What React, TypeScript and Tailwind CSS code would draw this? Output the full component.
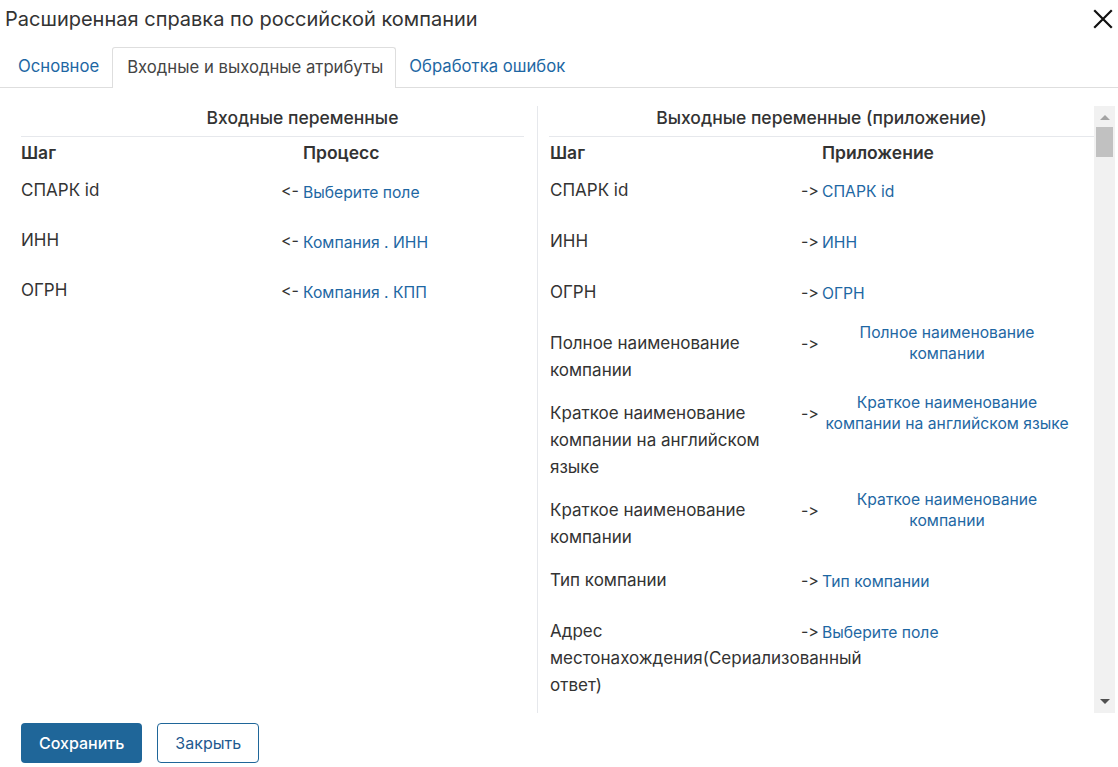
const inputRows = [
  { step: "СПАРК id", value: "Выберите поле" },
  { step: "ИНН", value: "Компания . ИНН" },
  { step: "ОГРН", value: "Компания . КПП" },
];

const outputRows = [
  { step: "СПАРК id", value: "СПАРК id", multi: false },
  { step: "ИНН", value: "ИНН", multi: false },
  { step: "ОГРН", value: "ОГРН", multi: false },
  { step: "Полное наименование компании", value: "Полное наименование компании", multi: true },
  {
    step: "Краткое наименование компании на английском языке",
    value: "Краткое наименование компании на английском языке",
    multi: true,
  },
  { step: "Краткое наименование компании", value: "Краткое наименование компании", multi: true },
  { step: "Тип компании", value: "Тип компании", multi: false },
  { step: "Адрес местонахождения(Сериализованный ответ)", value: "Выберите поле", multi: false },
];

export default function App() {
  return (
    <div
      className="w-[1118px] h-[767px] bg-white text-[#333] overflow-hidden flex flex-col [font-feature-settings:'calt'_0,'liga'_0]"
      style={{ fontFamily: "Inter, 'Noto Sans', sans-serif" }}
    >
      {/* title */}
      <div className="flex items-center justify-between h-[37px] pl-[5px] pr-[5px]">
        <div className="text-[20px] leading-[26px] text-[#333]">
          Расширенная справка по российской компании
        </div>
        <svg width="20" height="20" viewBox="0 0 20 20" className="mt-[1px]">
          <path d="M2 2L18 18M18 2L2 18" stroke="#111" strokeWidth="2.2" strokeLinecap="square" />
        </svg>
      </div>

      {/* tabs */}
      <div className="mt-[10px] flex border-b border-[#dedede] h-[41px] pl-[3px]">
        <div className="pl-[15px] pr-[13px] flex items-center text-[16.7px] text-[#1e67a3]">Основное</div>
        <div className="pl-[14px] pr-[12px] flex items-center text-[16.7px] text-[#444] border border-b-0 border-[#dedede] rounded-t-[3px] bg-white -mb-px">
          Входные и выходные атрибуты
        </div>
        <div className="pl-[13px] flex items-center text-[16.7px] text-[#1e67a3]">Обработка ошибок</div>
      </div>

      {/* content */}
      <div className="mt-[18px] flex h-[607px] pl-[21px] pr-[3px]">
        {/* input */}
        <div className="w-[503px] shrink-0">
          <div className="pl-[60px] text-center text-[17.5px] font-medium leading-[24px] pt-0 pb-[6px] border-b border-[#e6e8ec]">
            Входные переменные
          </div>
          <div className="flex text-[17.5px] font-semibold leading-[27px] pt-[2px] pb-[2.5px]">
            <div className="w-[282px]">Шаг</div>
            <div>Процесс</div>
          </div>
          {inputRows.map((r) => (
            <div key={r.step} className="flex min-h-[50px] py-2 items-start">
              <div className="w-[260px] text-[17px] leading-[27px]">{r.step}</div>
              <div className="w-[22px] text-[16px] leading-[27px] text-[#333]">&lt;-</div>
              <div className="pt-[5px] text-[15.7px] leading-[21px] text-[#1e67a3]">{r.value}</div>
            </div>
          ))}
        </div>

        <div className="ml-[13px] w-px bg-[#e6e8ec] shrink-0" />

        {/* output */}
        <div className="ml-[11px] flex-1 min-w-0 overflow-hidden">
          <div className="text-center text-[17.5px] font-medium leading-[24px] pt-0 pb-[6px] border-b border-[#e6e8ec]">
            Выходные переменные (приложение)
          </div>
          <div className="flex text-[17.5px] font-semibold leading-[27px] pt-[2px] pb-[2.5px] pl-[1px]">
            <div className="w-[272px]">Шаг</div>
            <div>Приложение</div>
          </div>
          {outputRows.map((r, i) => (
            <div key={i} className="flex min-h-[51px] pl-[1px] items-start">
              <div className="w-[240px] shrink-0 py-2 text-[17px] leading-[27px]">{r.step}</div>
              <div className="ml-[11px] w-[21px] shrink-0 pt-2 text-[16px] leading-[27px]">-&gt;</div>
              <div className={r.multi ? "pt-0" : "pt-[10px]"}>
                <span className="inline-block max-w-[250px] text-center text-[15.7px] leading-[21px] text-[#1e67a3]">
                  {r.value}
                </span>
              </div>
            </div>
          ))}
        </div>

        {/* scrollbar */}
        <div className="w-[21px] shrink-0 bg-[#f1f1f1] flex flex-col items-center">
          <div className="mt-[9px] w-0 h-0 border-l-[5px] border-r-[5px] border-b-[5px] border-l-transparent border-r-transparent border-b-[#a3a3a3]" />
          <div className="mt-[7px] w-[17px] h-[30px] bg-[#c1c1c1]" />
          <div className="flex-1" />
          <div className="mb-[9px] w-0 h-0 border-l-[5px] border-r-[5px] border-t-[5px] border-l-transparent border-r-transparent border-t-[#505050]" />
        </div>
      </div>

      {/* footer */}
      <div className="mt-[10px] flex gap-[15px] pl-[21px]">
        <button className="h-[40px] px-[18px] rounded-[4px] bg-[#1f6699] text-white text-[16px] font-medium">
          Сохранить
        </button>
        <button className="h-[40px] px-[17px] rounded-[4px] border border-[#1f6699] text-[#1f5a8f] text-[16px]">
          Закрыть
        </button>
      </div>
    </div>
  );
}
